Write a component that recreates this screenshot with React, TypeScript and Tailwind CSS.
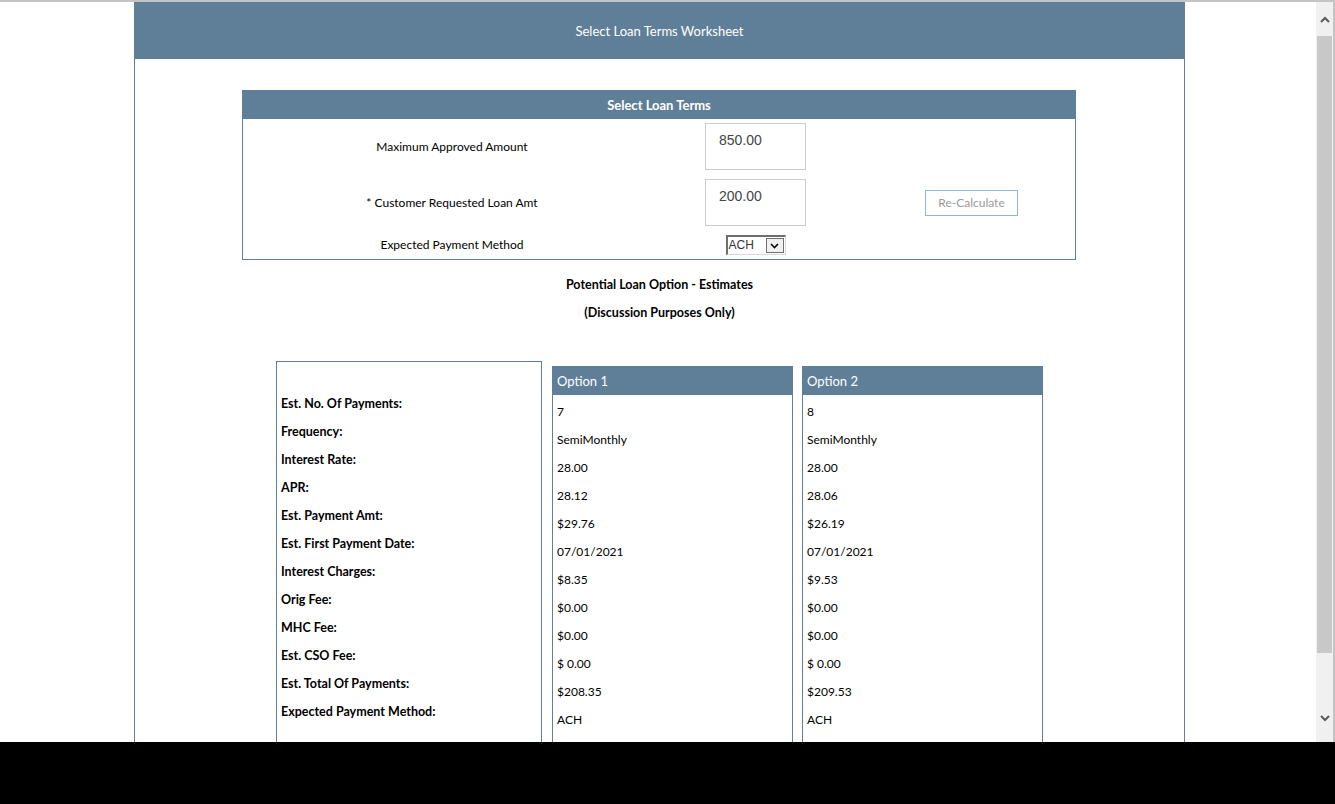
import React from "react";

const rows = [
  ["Est. No. Of Payments:", "7", "8"],
  ["Frequency:", "SemiMonthly", "SemiMonthly"],
  ["Interest Rate:", "28.00", "28.00"],
  ["APR:", "28.12", "28.06"],
  ["Est. Payment Amt:", "$29.76", "$26.19"],
  ["Est. First Payment Date:", "07/01/2021", "07/01/2021"],
  ["Interest Charges:", "$8.35", "$9.53"],
  ["Orig Fee:", "$0.00", "$0.00"],
  ["MHC Fee:", "$0.00", "$0.00"],
  ["Est. CSO Fee:", "$ 0.00", "$ 0.00"],
  ["Est. Total Of Payments:", "$208.35", "$209.53"],
  ["Expected Payment Method:", "ACH", "ACH"],
];

function OptionCol({ title, idx }: { title: string; idx: 1 | 2 }) {
  return (
    <div className="mt-[5px] w-[241px] shrink-0 border border-[#5f7f98] border-t-0">
      <div className="h-[29px] bg-[#5f7f98] px-[4px] text-[13px] leading-[30px] text-white">{title}</div>
      <div className="pt-[3px]">
        {rows.map((r) => (
          <div key={r[0]} className="flex h-[28px] items-center px-[4px] text-[12px] text-black">
            {r[idx]}
          </div>
        ))}
        <div className="h-[40px]" />
      </div>
    </div>
  );
}

function Field({ value }: { value: string }) {
  return (
    <div className="h-[47px] w-[101px] border border-[#cccccc] px-[13px] pt-[6px] font-['Liberation_Sans',sans-serif] text-[14px] text-[#444]">
      {value}
    </div>
  );
}

export default function App() {
  return (
    <div className="flex h-[804px] w-[1335px] flex-col overflow-hidden bg-black font-['Lato',sans-serif]">
      <div className="flex h-[742px] border-t-2 border-[#c4c4c4] bg-white">
        <div className="relative flex-1 overflow-hidden">
          <div className="ml-[134px] w-[1051px] border-x border-[#5f7f98]">
            <div className="-mx-px flex h-[57px] items-center justify-center bg-[#5f7f98] pt-[2px] text-[13px] text-white">
              Select Loan Terms Worksheet
            </div>

            <div className="ml-[107px] mt-[31px] w-[834px]">
              <div className="h-[29px] bg-[#5f7f98] text-center text-[13px] font-bold leading-[30px] text-white">
                Select Loan Terms
              </div>
              <div className="border border-t-0 border-[#5f7f98] pb-[4px] pt-[4px] text-[12px] text-black">
                <div className="grid grid-cols-[418px_189px_1fr] items-center">
                  <div className="text-center">Maximum Approved Amount</div>
                  <div className="flex justify-center">
                    <Field value="850.00" />
                  </div>
                  <div />
                </div>
                <div className="mt-[9px] grid grid-cols-[418px_189px_1fr] items-center">
                  <div className="text-center">* Customer Requested Loan Amt</div>
                  <div className="flex justify-center">
                    <Field value="200.00" />
                  </div>
                  <div className="flex justify-center pl-[18px]">
                    <button className="h-[26px] w-[93px] border border-[#8fb4d6] bg-white text-[12px] text-[#9a9a9a]">
                      Re-Calculate
                    </button>
                  </div>
                </div>
                <div className="mt-[9px] grid grid-cols-[418px_189px_1fr] items-center">
                  <div className="text-center">Expected Payment Method</div>
                  <div className="flex justify-center">
                    <div className="flex h-[20px] w-[60px] border-l-2 border-t-2 border-[#6f6f6f] border-b border-r border-b-[#d8d8d8] border-r-[#d8d8d8] bg-white font-['Liberation_Sans',sans-serif] text-[12px] text-[#333]">
                      <div className="flex-1 pl-[1px] leading-[17px]">ACH</div>
                      <div className="m-[1px] flex w-[18px] items-center justify-center border border-[#707070] bg-[#f0f0f0]">
                        <svg width="9" height="6" viewBox="0 0 9 6">
                          <path d="M1 1l3.5 3.5L8 1" stroke="#000" strokeWidth="1.6" fill="none" />
                        </svg>
                      </div>
                    </div>
                  </div>
                  <div />
                </div>
              </div>
            </div>

            <div className="mt-[16px] text-center text-[12.5px] font-bold text-black">Potential Loan Option - Estimates</div>
            <div className="mt-[9px] text-center text-[12.5px] font-bold text-black">(Discussion Purposes Only)</div>

            <div className="ml-[141px] mt-[38px] flex">
              <div className="w-[266px] shrink-0 border border-[#5f7f98] pt-[29px]">
                {rows.map((r) => (
                  <div key={r[0]} className="flex h-[28px] items-center px-[4px] text-[12.5px] font-bold text-black">
                    {r[0]}
                  </div>
                ))}
                <div className="h-[40px]" />
              </div>
              <div className="ml-[10px]">
                <OptionCol title="Option 1" idx={1} />
              </div>
              <div className="ml-[9px]">
                <OptionCol title="Option 2" idx={2} />
              </div>
            </div>
            <div className="h-[40px]" />
          </div>
        </div>

        <div className="flex w-[19px] shrink-0 flex-col border-r-2 border-[#c4c4c4] bg-[#f0f0f0]">
          <div className="flex h-[34px] items-center justify-center">
            <svg width="10" height="7" viewBox="0 0 10 7">
              <path d="M1 6l4-4 4 4" stroke="#5a5a5a" strokeWidth="2" fill="none" />
            </svg>
          </div>
          <div className="mx-[1px] h-[617px] bg-[#c8c8c8]" />
          <div className="flex flex-1 justify-center pt-[62px]">
            <svg width="10" height="7" viewBox="0 0 10 7">
              <path d="M1 1l4 4 4-4" stroke="#5a5a5a" strokeWidth="2" fill="none" />
            </svg>
          </div>
        </div>
      </div>
      <div className="flex-1 bg-black" />
    </div>
  );
}
